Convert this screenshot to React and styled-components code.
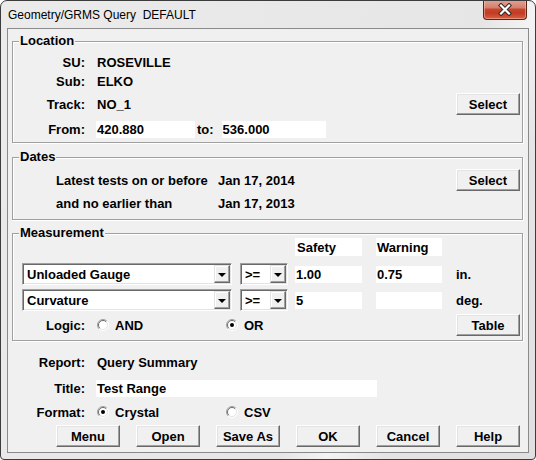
import React from "react";
import styled, { createGlobalStyle } from "styled-components";

const GlobalStyle = createGlobalStyle`
  html, body { margin: 0; padding: 0; background: #fff; }
  body {
    font-family: "Liberation Sans", Arial, sans-serif;
    font-size: 13px;
    font-weight: bold;
    color: #000;
  }
  * { box-sizing: border-box; }
`;

const Window = styled.div`
  width: 536px;
  height: 460px;
  border: 1px solid #3c3c3c;
  border-radius: 7px 7px 4px 4px;
  background: linear-gradient(
    115deg,
    #ebebeb 0%,
    #e6e6e6 66%,
    #f3f3f3 72%,
    #e4e4e4 80%,
    #e0e0e0 100%
  );
  display: flex;
  flex-direction: column;
  overflow: hidden;
`;

const TitleBar = styled.div`
  height: 27px;
  flex: none;
  display: flex;
  align-items: center;
  padding-left: 7px;
`;

const TitleText = styled.span`
  font-size: 12px;
  font-weight: normal;
  white-space: pre;
`;

const CloseButton = styled.div`
  margin-left: auto;
  margin-right: 8px;
  align-self: flex-start;
  margin-top: -1px;
  width: 44px;
  height: 20px;
  border: 1px solid #5e2318;
  border-top: none;
  border-radius: 0 0 4px 4px;
  background: linear-gradient(
    to bottom,
    #e3a395 0%,
    #d4806d 40%,
    #c5452d 50%,
    #c33c24 70%,
    #d9613f 100%
  );
  box-shadow: inset 0 0 0 1px rgba(255, 210, 200, 0.45);
  display: flex;
  align-items: center;
  justify-content: center;
`;

const Client = styled.div`
  flex: 1;
  margin: 0 6px 6px;
  border: 1px solid #8a8a8a;
  background: #f0f0f0;
  padding: 5px 5px 0 4px;
  display: flex;
  flex-direction: column;
`;

const Group = styled.fieldset`
  margin: ${(p) => p.$mt || 0}px 0 0;
  padding: ${(p) => p.$pt || 0}px 2px ${(p) => p.$pb || 0}px 0;
  border: 1px solid #a0a0a0;
  box-shadow: 1px 1px 0 #fff, inset 1px 1px 0 #fff;
  min-width: 0;
  display: flex;
  flex-direction: column;
`;

const Legend = styled.legend`
  margin-left: 6px;
  padding: 0 1px;
  line-height: 14px;
  height: 14px;
  background: #f0f0f0;
`;

const Row = styled.div`
  display: flex;
  align-items: center;
  height: ${(p) => p.$h}px;
  margin-top: ${(p) => p.$mt || 0}px;
  padding-left: ${(p) => p.$pl || 0}px;
  flex: none;
`;

const Label = styled.span`
  width: ${(p) => p.$w || 72}px;
  text-align: ${(p) => (p.$left ? "left" : "right")};
  white-space: nowrap;
  flex: none;
`;

const Value = styled.span`
  margin-left: ${(p) => (p.$ml === undefined ? 12 : p.$ml)}px;
  white-space: nowrap;
`;

const Edit = styled.div`
  width: ${(p) => p.$w}px;
  height: ${(p) => p.$h || 17}px;
  margin-left: ${(p) => p.$ml || 0}px;
  background: #fff;
  padding-left: ${(p) => p.$pad || 1}px;
  display: flex;
  align-items: center;
  white-space: nowrap;
  flex: none;
`;

const Button = styled.div`
  width: 64px;
  height: 22px;
  margin-left: ${(p) => (p.$auto ? "auto" : `${p.$ml || 0}px`)};
  background: #f0f0f0;
  border: 1px solid;
  border-color: #fff #696969 #696969 #fff;
  box-shadow: inset -1px -1px 0 #a0a0a0, inset 1px 1px 0 #e3e3e3;
  display: flex;
  align-items: center;
  justify-content: center;
  flex: none;
`;

const ComboBox = styled.div`
  width: ${(p) => p.$w}px;
  height: 22px;
  margin-left: ${(p) => p.$ml || 0}px;
  background: #fff;
  border: 1px solid;
  border-color: #a0a0a0 #fff #fff #a0a0a0;
  box-shadow: inset 1px 1px 0 #696969, inset -1px -1px 0 #e3e3e3;
  padding: 1px;
  display: flex;
  align-items: stretch;
  flex: none;
`;

const ComboText = styled.span`
  flex: 1;
  padding-left: 3px;
  display: flex;
  align-items: center;
  white-space: nowrap;
  overflow: hidden;
`;

const DropButton = styled.div`
  width: 16px;
  background: #f0f0f0;
  border: 1px solid;
  border-color: #e3e3e3 #696969 #696969 #e3e3e3;
  box-shadow: inset -1px -1px 0 #a0a0a0, inset 1px 1px 0 #fff;
  display: flex;
  align-items: center;
  justify-content: center;
`;

const Arrow = styled.span`
  width: 0;
  height: 0;
  border-left: 4px solid transparent;
  border-right: 4px solid transparent;
  border-top: 4px solid #000;
  margin-top: 1px;
`;

const Option = styled.div`
  width: ${(p) => p.$w || 129}px;
  margin-left: ${(p) => p.$ml || 0}px;
  display: flex;
  align-items: center;
  flex: none;
`;

const OptionText = styled.span`
  margin-left: 6px;
`;

const Unit = styled.span`
  margin-left: 14px;
`;

const Bottom = styled.div`
  padding-left: 1px;
  display: flex;
  flex-direction: column;
`;

const ButtonBar = styled.div`
  display: flex;
  gap: 16px;
  padding-left: 43px;
  margin-top: 5px;
  height: 22px;
`;

function CloseGlyph() {
  return (
    <svg width="16" height="13" viewBox="0 0 16 13">
      <path d="M4 2.5 L12 10.5 M12 2.5 L4 10.5" stroke="#3b2a26" strokeWidth="4.2" strokeLinecap="square" fill="none" />
      <path d="M4 2.5 L12 10.5 M12 2.5 L4 10.5" stroke="#fff" strokeWidth="2.2" strokeLinecap="square" fill="none" />
    </svg>
  );
}

function Radio({ checked }) {
  return (
    <svg width="12" height="12" viewBox="0 0 12 12" style={{ flex: "none" }}>
      <circle cx="6" cy="6" r="5" fill="#fff" />
      <path d="M2.1 9.9 A5.5 5.5 0 0 1 9.9 2.1" stroke="#a0a0a0" strokeWidth="1" fill="none" />
      <path d="M9.9 2.1 A5.5 5.5 0 0 1 2.1 9.9" stroke="#ffffff" strokeWidth="1" fill="none" />
      <path d="M2.8 9.2 A4.5 4.5 0 0 1 9.2 2.8" stroke="#696969" strokeWidth="1" fill="none" />
      <path d="M9.2 2.8 A4.5 4.5 0 0 1 2.8 9.2" stroke="#e3e3e3" strokeWidth="1" fill="none" />
      {checked && <circle cx="6" cy="6" r="2" fill="#000" />}
    </svg>
  );
}

function Combo({ w, ml, children }) {
  return (
    <ComboBox $w={w} $ml={ml}>
      <ComboText>{children}</ComboText>
      <DropButton>
        <Arrow />
      </DropButton>
    </ComboBox>
  );
}

export default function App() {
  return (
    <>
      <GlobalStyle />
      <Window>
        <TitleBar>
          <TitleText>Geometry/GRMS Query  DEFAULT</TitleText>
          <CloseButton>
            <CloseGlyph />
          </CloseButton>
        </TitleBar>
        <Client>
          <Group $pt={5} $pb={4}>
            <Legend>Location</Legend>
            <Row $h={19}>
              <Label>SU:</Label>
              <Value>ROSEVILLE</Value>
            </Row>
            <Row $h={19}>
              <Label>Sub:</Label>
              <Value>ELKO</Value>
            </Row>
            <Row $h={22} $mt={2}>
              <Label>Track:</Label>
              <Value>NO_1</Value>
              <Button $auto>Select</Button>
            </Row>
            <Row $h={17} $mt={6}>
              <Label>From:</Label>
              <Edit $w={99} $ml={11}>420.880</Edit>
              <Value $ml={2}>to:</Value>
              <Edit $w={104} $ml={8}>536.000</Edit>
            </Row>
          </Group>

          <Group $mt={7} $pt={5} $pb={7}>
            <Legend>Dates</Legend>
            <Row $h={22} $pl={43}>
              <Label $w={162} $left>Latest tests on or before</Label>
              <Value $ml={0}>Jan 17, 2014</Value>
              <Button $auto>Select</Button>
            </Row>
            <Row $h={18} $mt={3} $pl={43}>
              <Label $w={162} $left>and no earlier than</Label>
              <Value $ml={0}>Jan 17, 2013</Value>
            </Row>
          </Group>

          <Group $mt={6} $pb={4}>
            <Legend>Measurement</Legend>
            <Row $h={18} $mt={-2} $pl={282}>
              <Edit $w={67} $h={18} $pad={2}>Safety</Edit>
              <Edit $w={66} $h={18} $ml={14} $pad={1}>Warning</Edit>
            </Row>
            <Row $h={22} $mt={7}>
              <Combo w={210} ml={9}>Unloaded Gauge</Combo>
              <Combo w={48} ml={8}>&gt;=</Combo>
              <Edit $w={67} $ml={7}>1.00</Edit>
              <Edit $w={66} $ml={14}>0.75</Edit>
              <Unit>in.</Unit>
            </Row>
            <Row $h={22} $mt={4}>
              <Combo w={210} ml={9}>Curvature</Combo>
              <Combo w={48} ml={8}>&gt;=</Combo>
              <Edit $w={67} $ml={7}>5</Edit>
              <Edit $w={66} $ml={14}></Edit>
              <Unit>deg.</Unit>
            </Row>
            <Row $h={22} $mt={3}>
              <Label>Logic:</Label>
              <Option $ml={12}>
                <Radio />
                <OptionText>AND</OptionText>
              </Option>
              <Option $w={60}>
                <Radio checked />
                <OptionText>OR</OptionText>
              </Option>
              <Button $auto>Table</Button>
            </Row>
          </Group>

          <Bottom>
            <Row $h={17} $mt={13}>
              <Label>Report:</Label>
              <Value>Query Summary</Value>
            </Row>
            <Row $h={17} $mt={9}>
              <Label>Title:</Label>
              <Edit $w={281} $ml={11}>Test Range</Edit>
            </Row>
            <Row $h={16} $mt={7}>
              <Label>Format:</Label>
              <Option $ml={12}>
                <Radio checked />
                <OptionText>Crystal</OptionText>
              </Option>
              <Option $w={60}>
                <Radio />
                <OptionText>CSV</OptionText>
              </Option>
            </Row>
            <ButtonBar>
              <Button>Menu</Button>
              <Button>Open</Button>
              <Button>Save As</Button>
              <Button>OK</Button>
              <Button>Cancel</Button>
              <Button>Help</Button>
            </ButtonBar>
          </Bottom>
        </Client>
      </Window>
    </>
  );
}
